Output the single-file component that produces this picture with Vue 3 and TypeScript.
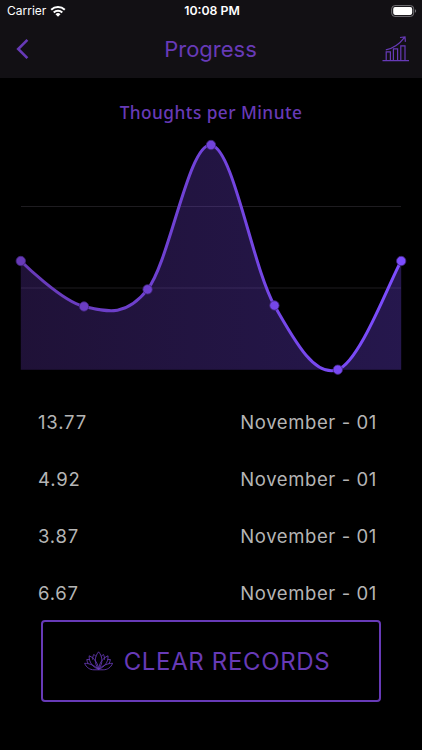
<script setup lang="ts">
interface Point {
  x: number
  y: number
}

interface Entry {
  value: string
  date: string
}

const entries: Entry[] = [
  { value: '13.77', date: 'November - 01' },
  { value: '4.92', date: 'November - 01' },
  { value: '3.87', date: 'November - 01' },
  { value: '6.67', date: 'November - 01' },
]

const baseline = 239.7
const smoothness = 0.35
const points: Point[] = [
  { x: 20.8, y: 131 },
  { x: 84, y: 176.5 },
  { x: 147.6, y: 159.4 },
  { x: 211, y: 15 },
  { x: 274.4, y: 175.5 },
  { x: 337.8, y: 239.7 },
  { x: 401.2, y: 131 },
]

function curve(list: Point[]): string {
  let d = `M${list[0].x} ${list[0].y}`
  let out: Point = { x: 0, y: 0 }
  for (let i = 1; i < list.length; i++) {
    const prev = list[i - 1]
    const cur = list[i]
    const next = list[Math.min(i + 1, list.length - 1)]
    const c1 = { x: prev.x + out.x, y: prev.y + out.y }
    out = {
      x: ((next.x - prev.x) / 2) * smoothness,
      y: ((next.y - prev.y) / 2) * smoothness,
    }
    d += ` C${c1.x} ${c1.y} ${cur.x - out.x} ${cur.y - out.y} ${cur.x} ${cur.y}`
  }
  return d
}

const line = curve(points)
const area = `${line} V${baseline} H${points[0].x} Z`
</script>

<template>
  <main class="screen">
    <header class="top">
      <div class="status">
        <div class="carrier">
          <span>Carrier</span>
          <svg width="16" height="12" viewBox="0 0 16 12">
            <path d="M.5 4.1a10.7 10.7 0 0 1 15 0l-1.4 1.5a8.7 8.7 0 0 0-12.2 0z" fill="#fff" />
            <path d="M3 6.7a7.2 7.2 0 0 1 10 0l-1.5 1.5a5.1 5.1 0 0 0-7 0z" fill="#fff" />
            <path d="M5.5 9.2a3.6 3.6 0 0 1 5 0L8 11.7z" fill="#fff" />
          </svg>
        </div>
        <span class="clock">10:08 PM</span>
        <svg class="battery" width="26" height="12" viewBox="0 0 26 12">
          <rect x=".7" y=".6" width="22" height="10.8" rx="3.2" fill="none" stroke="#77757a" />
          <rect x="2.2" y="2.1" width="19" height="7.8" rx="1.8" fill="#fff" />
          <path d="M24 4.2v3.6c1.5-.6 1.5-3 0-3.6z" fill="#77757a" />
        </svg>
      </div>
      <nav class="bar">
        <svg class="back" width="14" height="22" viewBox="0 0 14 22">
          <path d="M11.4 1.8 2.2 11l9.2 9.2" fill="none" stroke="#673ab7" stroke-width="2.6" />
        </svg>
        <h1>Progress</h1>
        <svg class="stats" width="28" height="26" viewBox="0 0 28 26" fill="none" stroke="#673ab7" stroke-width="1.2">
          <path d="M.5 24.6h26.5M4.2 24.6v-8.8h4.2v8.8M11.4 24.6V12.9h4.2v11.7M18.8 24.6V9.8h4.2v14.8" />
          <path d="M3.8 13.8C11 12.7 17.3 8.2 22.6 1.4M18 1.5l5-.6.4 5" />
        </svg>
      </nav>
    </header>

    <h2>Thoughts per Minute</h2>

    <svg class="chart" width="422" height="250" viewBox="0 0 422 250">
      <defs>
        <linearGradient id="stroke" gradientUnits="userSpaceOnUse" x1="21" y1="0" x2="401" y2="0">
          <stop offset="0" stop-color="#673ab7" />
          <stop offset="1" stop-color="#7c4dff" />
        </linearGradient>
      </defs>
      <path d="M21 76.5H401M21 158H401" stroke="#1e1c20" stroke-width="1.2" />
      <path :d="area" fill="url(#stroke)" fill-opacity=".3" />
      <path :d="line" fill="none" stroke="url(#stroke)" stroke-width="3" stroke-linejoin="round" />
      <circle
        v-for="p in points"
        :key="p.x"
        :cx="p.x"
        :cy="p.y"
        r="4.7"
        fill="url(#stroke)"
        stroke="#40257a"
        stroke-width=".8"
      />
    </svg>

    <ul class="records">
      <li v-for="(entry, i) in entries" :key="i">
        <span>{{ entry.value }}</span>
        <span class="date">{{ entry.date }}</span>
      </li>
    </ul>

    <button class="clear" type="button">
      <svg width="30" height="20" viewBox="0 0 30 20" fill="none" stroke="#673ab7" stroke-width=".85" stroke-linejoin="round">
        <path d="M14.6 18.3C10.2 12.500 10.200 6 14.600.8c4.400 5.200 4.400 11.700 0 17.500z" />
        <path d="M11.800 5.300 9.900 3.400c-1 1.600-1.300 3.400-1.200 5.300M17.400 5.300l1.900-1.900c1 1.600 1.300 3.400 1.200 5.300" />
        <path d="M14.600 18.300C14 12.500 10.800 7.300 5.200 4.800c-.5 6 3.400 11.500 9.400 13.500zM14.600 18.300C15.200 12.500 18.400 7.300 24 4.800c.5 6-3.400 11.500-9.400 13.500z" />
        <path d="M5.500 8.600 2.800 8.500c.2 1.700.7 3 1.500 4.300M23.700 8.600l2.700-.1c-.2 1.700-.7 3-1.500 4.300" />
        <path d="M14.600 18.300C10.500 14.500 5.500 12.300.6 12.300 2.300 16.500 5.800 18.800 10 18.800h9.200c4.200 0 7.700-2.300 9.400-6.500-4.900 0-9.900 2.200-14 6z" />
      </svg>
      <span>CLEAR RECORDS</span>
    </button>
  </main>
</template>

<style>
body {
  background: #000;
}
</style>

<style scoped>
.screen {
  width: 422px;
  height: 750px;
  overflow: hidden;
  background: #000;
  font-family: Inter, 'Liberation Sans', sans-serif;
  color: #b5b5b5;
  display: flex;
  flex-direction: column;
}
.top {
  height: 78px;
  flex: none;
  background: #121014;
}
.status {
  height: 21px;
  padding: 0 5px 0 7px;
  display: grid;
  grid-template-columns: 1fr auto 1fr;
  align-items: center;
  color: #fff;
  font-size: 12px;
}
.carrier {
  display: flex;
  align-items: center;
  gap: 4px;
}
.clock {
  font-weight: 600;
  font-size: 12.3px;
}
.battery {
  justify-self: end;
}
.bar {
  height: 56px;
  padding: 0 12px 0 16px;
  display: grid;
  grid-template-columns: 1fr auto 1fr;
  align-items: center;
}
.stats {
  justify-self: end;
}
h1 {
  margin: 0 5px 0 0;
  font-size: 22px;
  font-weight: 400;
  line-height: 28px;
  color: #673ab7;
}
h2 {
  margin: 23px 0 0;
  height: 24px;
  flex: none;
  text-align: center;
  font-family: 'Noto Sans', sans-serif;
  font-size: 17.3px;
  line-height: 24px;
  font-weight: 500;
  letter-spacing: 0.45px;
  color: #673ab7;
}
.chart {
  display: block;
  flex: none;
  margin-top: 5px;
}
.records {
  list-style: none;
  margin: 13px 0 0;
  padding: 0 45px 0 38px;
  flex: none;
}
.records li {
  height: 57px;
  display: flex;
  align-items: center;
  justify-content: space-between;
  font-size: 18.5px;
  letter-spacing: 0.8px;
}
.records .date {
  letter-spacing: 0.6px;
}
.clear {
  box-sizing: border-box;
  width: 340px;
  height: 82px;
  flex: none;
  margin: -1px 0 0 41px;
  padding: 0 8px 0 0;
  border: 2px solid #673ab7;
  border-radius: 4px;
  background: #000;
  color: #673ab7;
  font: inherit;
  font-size: 24px;
  letter-spacing: 0.65px;
  display: flex;
  align-items: center;
  justify-content: center;
  gap: 10px;
}
.clear svg {
  flex: none;
  margin-bottom: 1px;
}
</style>
